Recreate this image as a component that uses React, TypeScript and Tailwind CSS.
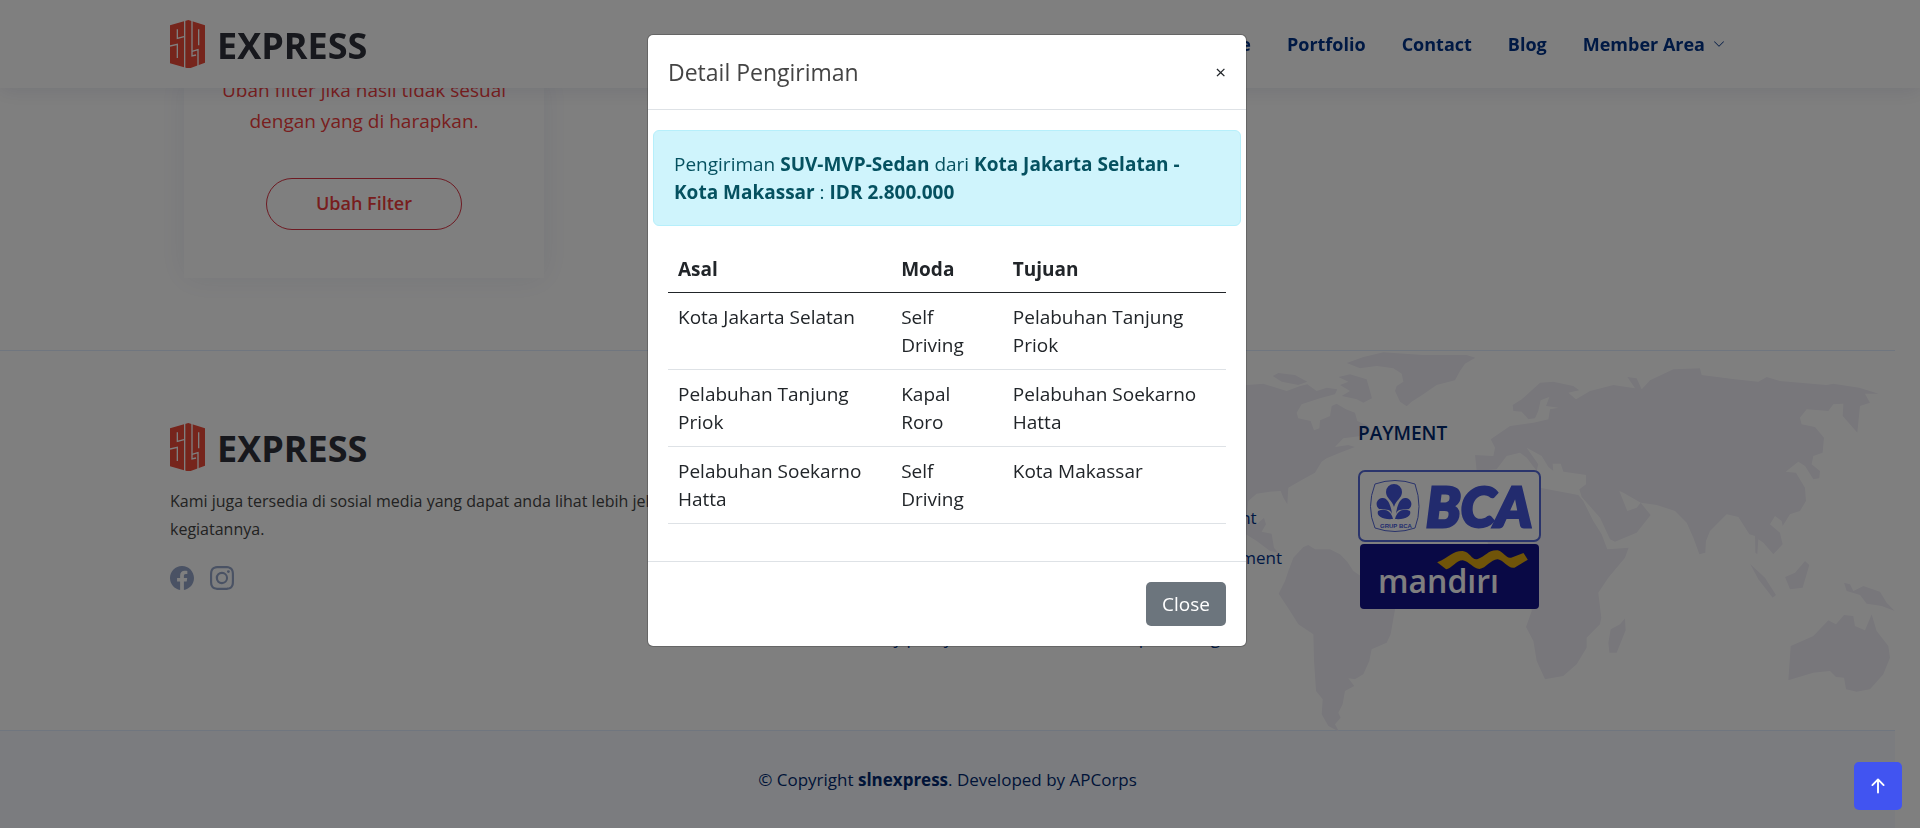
import React, { useState } from 'react';
import {
  BsArrowUpShort,
  BsChevronDown,
  BsChevronRight,
  BsFacebook,
  BsInstagram,
} from 'react-icons/bs';

const navItems = ['Home', 'About', 'Service', 'Portfolio', 'Contact', 'Blog'];

const usefulLinks = ['Home', 'About us', 'Services', 'Terms of service', 'Privacy policy'];

const services = [
  'Web Design',
  'Web Development',
  'Product Management',
  'Marketing',
  'Graphic Design',
];

const routes = [
  { asal: 'Kota Jakarta Selatan', moda: 'Self Driving', tujuan: 'Pelabuhan Tanjung Priok' },
  { asal: 'Pelabuhan Tanjung Priok', moda: 'Kapal Roro', tujuan: 'Pelabuhan Soekarno Hatta' },
  { asal: 'Pelabuhan Soekarno Hatta', moda: 'Self Driving', tujuan: 'Kota Makassar' },
];

const Logo: React.FC = () => (
  <a href="#" className="flex items-center gap-3">
    <svg width="35" height="48" viewBox="0 0 105 144" aria-hidden="true">
      <path d="M0 16 L42 4 L55 0 L105 16 V128 L62 144 H50 L0 130 Z" fill="#ec4a38" />
      <g fill="none" stroke="#fff" strokeWidth="4">
        <path d="M44 0 V144" />
        <path d="M42 50 L22 55 V28" />
        <path d="M0 78 L22 73 V114" />
        <path d="M66 0 V108 L78 105" />
        <path d="M86 28 V76" />
        <path d="M66 94 L84 89 V142" />
      </g>
    </svg>
    <span className="pt-1 text-[36px] leading-[44px] font-bold text-[#2e303b]">EXPRESS</span>
  </a>
);

const WorldMap: React.FC = () => (
  <svg
    className="absolute top-0 right-0"
    width="675"
    height="380"
    viewBox="0 30 2025 1140"
    fill="#f1eff7"
    aria-hidden="true"
  >
    {/* Americas */}
    <path d="M0 120 L80 132 L130 128 L200 150 L240 135 L262 130 L290 150 L320 140 L352 145 L345 160 L300 172 L245 190 L230 215 L235 232 L272 240 L282 268 L298 262 L300 238 L330 225 L335 195 L350 188 L378 205 L405 215 L412 240 L445 255 L452 268 L425 285 L370 292 L345 318 L385 312 L405 318 L360 335 L320 352 L305 362 L285 395 L240 420 L205 440 L202 490 L190 470 L182 450 L150 452 L110 458 L85 480 L80 530 L110 550 L132 530 L138 550 L125 572 L155 578 L162 620 L175 635 L150 630 L110 600 L70 575 L0 530 Z" />
    <path d="M158 105 L175 96 L225 102 L262 122 L235 132 L185 122 Z" />
    <path d="M355 108 L390 100 L440 115 L450 150 L456 172 L430 185 L410 175 L365 165 L390 150 L360 132 L385 122 Z" />
    <path d="M380 66 L430 48 L490 34 L610 42 L740 42 L766 50 L735 68 L720 90 L705 118 L650 132 L610 160 L575 182 L560 196 L540 182 L525 150 L530 135 L550 122 L545 98 L520 82 L470 75 L420 82 Z" />
    <path d="M250 618 L265 612 L285 625 L330 625 L360 640 L382 662 L400 690 L430 710 L480 740 L526 800 L512 880 L500 905 L455 925 L448 960 L430 1000 L405 1015 L385 1012 L403 1035 L375 1050 L368 1090 L355 1115 L362 1130 L345 1150 L357 1172 L325 1155 L305 1120 L308 1075 L288 1050 L282 960 L280 880 L235 850 L210 810 L176 758 L195 720 L205 690 L220 650 Z" />
    {/* Africa */}
    <path d="M960 440 L1075 462 L1090 480 L1120 540 L1145 580 L1162 625 L1226 620 L1215 650 L1165 710 L1135 755 L1144 830 L1140 850 L1100 890 L1100 920 L1070 970 L1030 1005 L975 1015 L950 960 L940 900 L918 858 L935 810 L925 720 L850 690 L800 600 L830 520 Z" />
    <path d="M1215 832 L1217 868 L1190 935 L1168 935 L1165 905 L1172 865 L1200 850 Z" />
    {/* Europe and Asia */}
    <path d="M878 192 L905 175 L960 125 L1000 122 L1060 135 L1078 148 L1045 155 L1068 175 L1110 150 L1180 132 L1245 142 L1222 108 L1250 112 L1265 145 L1290 118 L1360 85 L1440 82 L1445 102 L1545 115 L1615 122 L1640 108 L1680 120 L1820 132 L1840 128 L1918 140 L1976 158 L1935 158 L1950 185 L1920 195 L1912 275 L1868 225 L1870 188 L1840 190 L1825 210 L1760 205 L1740 230 L1745 250 L1785 258 L1812 290 L1808 335 L1780 345 L1775 370 L1800 390 L1798 412 L1780 415 L1755 375 L1735 362 L1697 392 L1728 395 L1755 440 L1758 480 L1740 510 L1710 520 L1688 555 L1685 540 L1665 525 L1650 550 L1680 575 L1688 610 L1660 640 L1630 605 L1615 595 L1612 640 L1606 635 L1605 585 L1588 580 L1555 528 L1520 520 L1470 570 L1458 600 L1456 635 L1438 640 L1420 590 L1400 545 L1365 510 L1310 492 L1262 485 L1210 455 L1198 450 L1222 510 L1250 500 L1262 485 L1292 522 L1250 575 L1185 602 L1170 595 L1140 530 L1085 468 L1078 445 L1098 430 L1098 402 L1030 392 L1022 368 L998 368 L1000 390 L985 378 L965 345 L920 320 L955 370 L950 390 L920 350 L900 335 L860 345 L830 385 L770 390 L765 342 L820 345 L825 320 L812 295 L870 255 L940 245 L985 235 L990 205 L1015 200 L978 195 L988 168 L962 178 L955 210 L945 232 L925 235 L905 212 L880 210 Z" />
    <path d="M1590 668 L1635 710 L1668 762 L1658 770 L1615 715 Z" />
    <path d="M1755 660 L1768 672 L1748 740 L1710 745 L1695 708 L1725 695 Z" />
    <path d="M1872 725 L1890 730 L1900 750 L1930 735 L1980 752 L2000 785 L2024 810 L1985 795 L1940 788 L1920 762 L1880 750 Z" />
    {/* Australia */}
    <path d="M1955 820 L1970 870 L2005 915 L2010 950 L1990 1000 L1950 1045 L1910 1052 L1878 1045 L1872 1010 L1848 1008 L1830 990 L1780 995 L1705 1018 L1712 915 L1780 885 L1825 838 L1848 850 L1872 822 L1900 825 L1905 855 L1935 868 Z" />
  </svg>
);

const BcaLogo: React.FC = () => (
  <svg width="183" height="73" viewBox="0 0 183 73" role="img" aria-label="BCA">
    <rect x="1" y="1" width="181" height="70" rx="6" fill="#fff" stroke="#5468d8" strokeWidth="2" />
    <path
      d="M17 14 Q37 7 57 14 Q65 37 57 58 Q37 65 17 58 Q8 37 17 14 Z"
      fill="none"
      stroke="#5468d8"
      strokeWidth="1"
    />
    <g fill="#4557dd">
      <path d="M36 37 C34 30 28 28 28 22 A8 8 0 0 1 44 22 C44 28 38 30 36 37 Z" />
      <path d="M34 44 C33 34 29 27 24 28 C18 29 17 36 21 39 C27 40 32 38 34 44 Z" />
      <path d="M38 44 C39 34 43 27 48 28 C54 29 55 36 51 39 C45 40 40 38 38 44 Z" />
      <path d="M35 49 C33 40 26 38 20 41 C18 46 25 50 35 49 Z" />
      <path d="M37 49 C39 40 46 38 52 41 C54 46 47 50 37 49 Z" />
    </g>
    <text x="22" y="58" fill="#4557dd" fontSize="6" fontWeight="700" fontFamily="Liberation Sans, sans-serif">
      GRUP BCA
    </text>
    <text
      x="68"
      y="57"
      fill="#4557dd"
      stroke="#4557dd"
      strokeWidth="3"
      fontSize="56"
      fontWeight="900"
      fontStyle="italic"
      fontFamily="Lato, sans-serif"
    >
      BCA
    </text>
  </svg>
);

const MandiriLogo: React.FC = () => (
  <svg width="183" height="68" viewBox="0 0 183 68" role="img" aria-label="mandiri">
    <rect x="2" y="1" width="179" height="65" rx="4" fill="#12128a" />
    <path
      transform="translate(-138.5 -204) scale(0.3333)"
      d="M653 670 C690 655 700 635 730 636 C755 640 755 665 775 660 C800 652 805 632 835 634 C855 640 860 660 875 656 L912 642 L925 662 L885 686 C865 690 855 665 835 661 C815 660 800 688 780 690 C760 688 750 668 730 664 C710 664 695 690 680 691 Z"
      fill="#e0a812"
    />
    <text x="20" y="50" fill="#fff" fontSize="32" fontWeight="600" fontFamily="Open Sans, sans-serif">
      mandırı
    </text>
  </svg>
);

const FooterLinks: React.FC<{ title: string; items: string[] }> = ({ title, items }) => (
  <div>
    <h4 className="text-[17px] leading-5 font-semibold uppercase text-[#012970]">{title}</h4>
    <ul className="mt-[15px]">
      {items.map((item) => (
        <li key={item} className="flex h-10 items-center gap-1">
          <BsChevronRight size={12} className="text-[#899bbd]" />
          <a href="#" className="text-[17px] text-[#013289]">
            {item}
          </a>
        </li>
      ))}
    </ul>
  </div>
);

const DetailModal: React.FC<{ onClose: () => void }> = ({ onClose }) => (
  <div className="fixed inset-0 z-20 flex items-start justify-center bg-black/50 pt-[34px] pr-[26px]">
    <div
      role="dialog"
      aria-labelledby="detail-title"
      className="w-[600px] rounded-md border border-black/20 bg-white bg-clip-padding text-[#212529]"
    >
      <div className="flex items-center justify-between border-b border-[#dee2e6] px-5 py-5">
        <h5 id="detail-title" className="text-[23px] leading-[34px] text-[#444444]">
          Detail Pengiriman
        </h5>
        <button type="button" aria-label="Tutup" onClick={onClose} className="text-[19px] leading-7">
          ×
        </button>
      </div>

      <div className="px-[5px] pt-5 pb-[37px]">
        <div className="rounded-md border border-[#b6effb] bg-[#cff4fc] px-5 py-[19px] text-[19px] leading-7 text-[#055160]">
          Pengiriman <b className="font-bold">SUV-MVP-Sedan</b> dari{' '}
          <b className="font-bold">Kota Jakarta Selatan - Kota Makassar</b> :{' '}
          <b className="font-bold">IDR 2.800.000</b>
        </div>
        <div className="mt-5 px-[15px]">
          <table className="w-full table-fixed border-collapse text-left text-[19px] leading-7">
            <thead>
              <tr className="border-b border-[#212529]">
                <th className="w-2/5 px-[10px] py-[9px] font-bold">Asal</th>
                <th className="w-1/5 px-[10px] py-[9px] font-bold">Moda</th>
                <th className="w-2/5 px-[10px] py-[9px] font-bold">Tujuan</th>
              </tr>
            </thead>
            <tbody>
              {routes.map((route) => (
                <tr key={route.asal} className="border-b border-[#dee2e6] align-top">
                  <td className="p-[10px]">{route.asal}</td>
                  <td className="p-[10px]">{route.moda}</td>
                  <td className="p-[10px]">{route.tujuan}</td>
                </tr>
              ))}
            </tbody>
          </table>
        </div>
      </div>

      <div className="flex justify-end border-t border-[#dee2e6] p-5">
        <button
          type="button"
          onClick={onClose}
          className="h-11 w-20 rounded-[5px] bg-[#6c757d] text-[19px] leading-7 text-white"
        >
          Close
        </button>
      </div>
    </div>
  </div>
);

const App: React.FC = () => {
  const [showDetail, setShowDetail] = useState(true);

  return (
    <div className="h-screen overflow-hidden bg-white font-['Open_Sans','Noto_Sans',sans-serif] text-[#444444]">
      <header className="fixed inset-x-0 top-0 z-10 bg-white pr-[25px] shadow-[0_2px_20px_rgba(1,41,112,0.1)]">
        <div className="mx-auto flex h-[88px] max-w-[1555px] items-center justify-between">
          <Logo />
          <nav className="flex items-center gap-9 text-[18px] font-bold text-[#013289]">
            {navItems.map((item) => (
              <a key={item} href="#">
                {item}
              </a>
            ))}
            <a href="#" className="flex items-center gap-2">
              Member Area
              <BsChevronDown size={12} />
            </a>
          </nav>
        </div>
      </header>

      <div className="pr-[25px]">
        <main className="mx-auto max-w-[1555px] pt-[75px] pb-[72px]">
          <section className="ml-[14px] w-[360px] bg-white px-8 pb-12 text-center shadow-[0_0_30px_rgba(1,41,112,0.08)]">
            <p className="text-[19px] leading-[31px] text-[#f03c3c]">
              Ubah filter jika hasil tidak sesuai dengan yang di harapkan.
            </p>
            <button
              type="button"
              className="mt-[41px] h-[52px] w-[196px] rounded-full border border-[#dc3545] pb-[2px] text-[18px] font-semibold text-[#f03c3c]"
            >
              Ubah Filter
            </button>
          </section>
        </main>

        <footer>
          <div className="relative border-y border-[#e1ecff]">
            <WorldMap />
            <div className="relative mx-auto grid h-[379px] max-w-[1555px] grid-cols-12 gap-x-[29px] pt-[72px]">
              <div className="col-span-5">
                <Logo />
                <p className="mt-4 text-[16px] leading-7">
                  Kami juga tersedia di sosial media yang dapat anda lihat lebih jelas mengenai
                  kegiatannya.
                </p>
                <div className="mt-[23px] flex gap-4 text-[#95a5c8]">
                  <a href="#" aria-label="Facebook">
                    <BsFacebook size={24} />
                  </a>
                  <a href="#" aria-label="Instagram">
                    <BsInstagram size={24} />
                  </a>
                </div>
              </div>
              <div className="col-span-2">
                <FooterLinks title="Useful Links" items={usefulLinks} />
              </div>
              <div className="col-span-2">
                <FooterLinks title="Our Services" items={services} />
              </div>
              <div className="col-span-3">
                <h4 className="text-[19px] leading-5 font-semibold text-[#012970]">PAYMENT</h4>
                <div className="mt-[27px] flex flex-col">
                  <BcaLogo />
                  <MandiriLogo />
                </div>
              </div>
            </div>
          </div>
          <div className="bg-[#f6f9ff] pt-[35px] pb-12 text-center text-[17px] leading-7 text-[#012970]">
            © Copyright <b className="font-bold">slnexpress</b>. Developed by APCorps
          </div>
        </footer>
      </div>

      {showDetail && <DetailModal onClose={() => setShowDetail(false)} />}

      <a
        href="#"
        aria-label="Kembali ke atas"
        className="fixed right-[18px] bottom-[18px] z-30 flex size-12 items-center justify-center rounded-[5px] bg-[#4154f1] text-white"
      >
        <BsArrowUpShort size={30} />
      </a>
    </div>
  );
};

export default App;
